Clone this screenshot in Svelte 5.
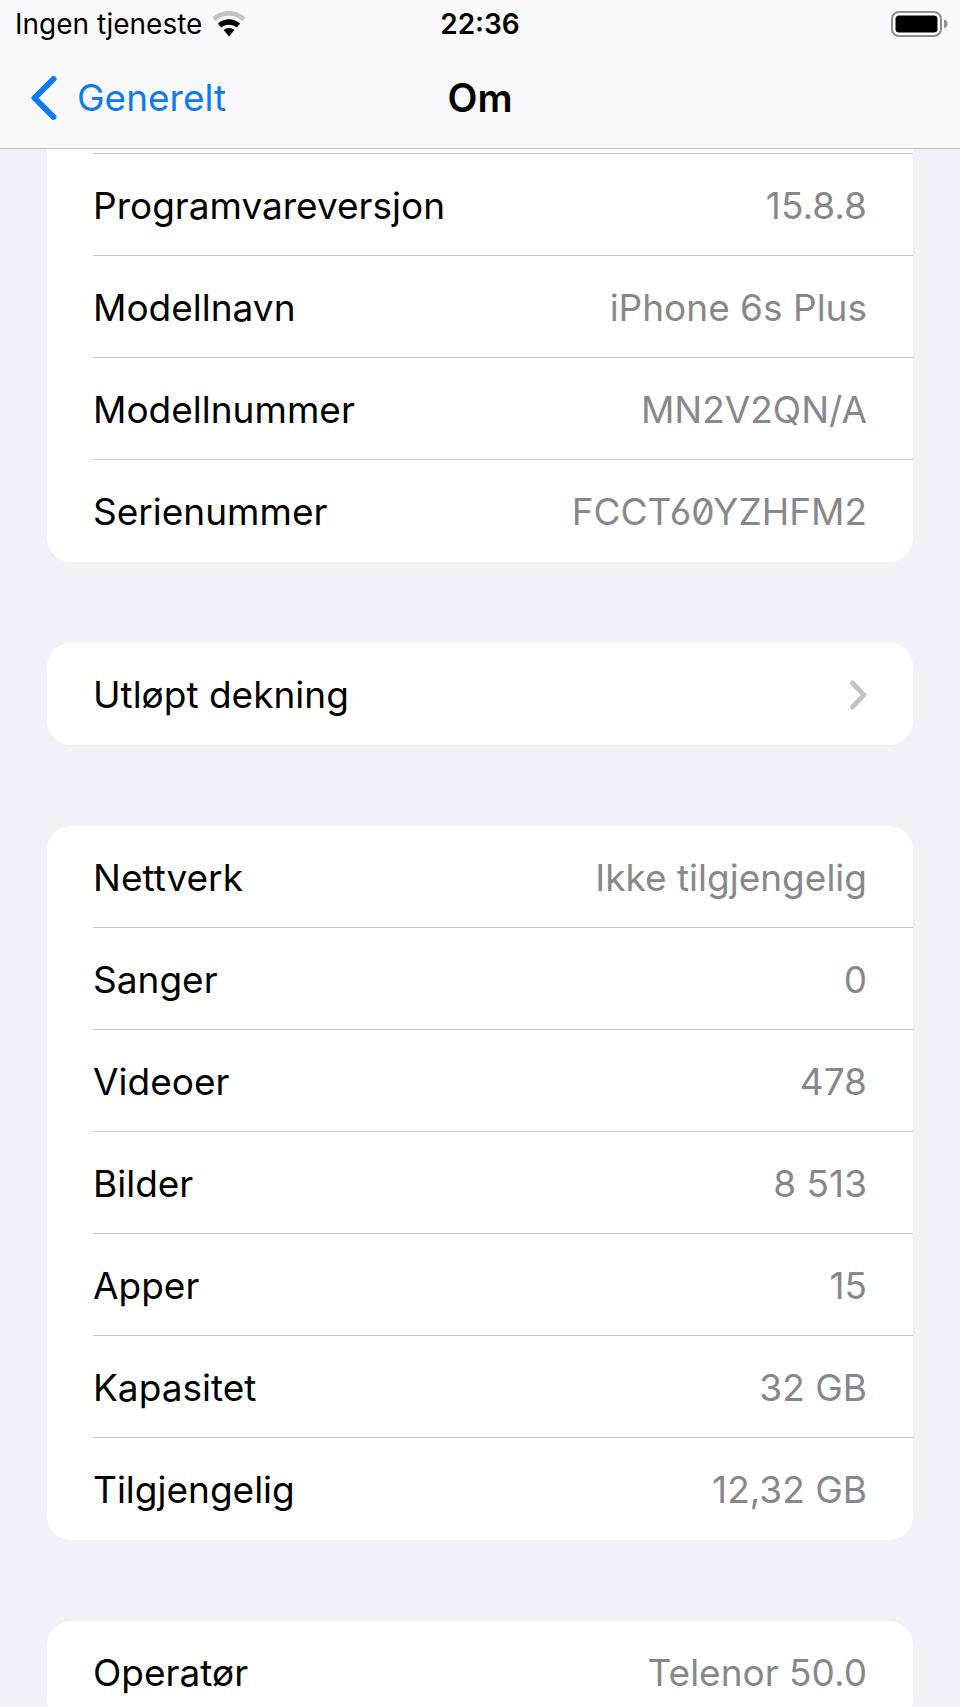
<script lang="ts">
	type Row = { label: string; value?: string; serial?: boolean; link?: boolean }
	type Group = { id: string; rows: Row[]; continued?: boolean }

	const groups: Group[] = [
		{
			id: 'device',
			continued: true,
			rows: [
				{ label: 'Programvareversjon', value: '15.8.8' },
				{ label: 'Modellnavn', value: 'iPhone 6s Plus' },
				{ label: 'Modellnummer', value: 'MN2V2QN/A' },
				{ label: 'Serienummer', value: 'FCCT60YZHFM2', serial: true }
			]
		},
		{ id: 'coverage', rows: [{ label: 'Utløpt dekning', link: true }] },
		{
			id: 'content',
			rows: [
				{ label: 'Nettverk', value: 'Ikke tilgjengelig' },
				{ label: 'Sanger', value: '0' },
				{ label: 'Videoer', value: '478' },
				{ label: 'Bilder', value: '8 513' },
				{ label: 'Apper', value: '15' },
				{ label: 'Kapasitet', value: '32 GB' },
				{ label: 'Tilgjengelig', value: '12,32 GB' }
			]
		},
		{ id: 'carrier', rows: [{ label: 'Operatør', value: 'Telenor 50.0' }] }
	]
</script>

<div class="screen">
	<header>
		<div class="status">
			<div class="service">
				<span>Ingen tjeneste</span>
				<svg width="34" height="26" viewBox="0 0 34 26" aria-hidden="true">
					<path
						d="M17 0C10.500 0 4.600 2.500 0.400 6.600L3.600 10C7.100 6.600 11.800 4.700 17 4.700S26.900 6.600 30.400 10L33.600 6.600C29.400 2.500 23.500 0 17 0Z"
						fill="#c3c3c5"
					/>
					<path
						d="M17 8.300C12.700 8.300 8.800 10 5.900 12.700L9.300 16.600C11.300 14.700 14 13.700 17 13.700S22.700 14.700 24.700 16.600L28.100 12.700C25.200 10 21.300 8.300 17 8.300Z"
					/>
					<path d="M17 17C14.900 17 13 17.800 11.600 19.100L17 25.400L22.400 19.100C21 17.800 19.100 17 17 17Z" />
				</svg>
			</div>
			<time>22:36</time>
			<svg class="battery" width="57" height="26" viewBox="0 0 57 26" aria-hidden="true">
				<rect x="1" y="1" width="49" height="24" rx="7" fill="#fff" stroke="#8e8e90" stroke-width="2" />
				<rect x="4.500" y="4.500" width="42" height="17" rx="3.500" />
				<path d="M53 8.500C55.200 9.300 56.500 11 56.500 13S55.200 16.700 53 17.500Z" fill="#8e8e90" />
			</svg>
		</div>
		<nav>
			<button class="back">
				<svg width="26" height="44" viewBox="0 0 26 44" aria-hidden="true">
					<path d="M22.500 3L3.500 22L22.500 41" />
				</svg>
				<span>Generelt</span>
			</button>
			<h1>Om</h1>
		</nav>
	</header>

	<main>
		{#each groups as group (group.id)}
			<ul class="group" class:continued={group.continued}>
				{#if group.continued}
					<li class="row partial" aria-hidden="true"></li>
				{/if}
				{#each group.rows as row (row.label)}
					<li class="row">
						{#if row.link}
							<button class="cell">
								<span>{row.label}</span>
								<svg width="18" height="30" viewBox="0 0 18 30" aria-hidden="true">
									<path d="M3.500 3L15 15L3.500 27" />
								</svg>
							</button>
						{:else}
							<div class="cell">
								<span>{row.label}</span>
								<span class="value" class:serial={row.serial}>{row.value}</span>
							</div>
						{/if}
					</li>
				{/each}
			</ul>
		{/each}
	</main>
</div>

<style>
	:global(body) {
		margin: 0;
	}

	.screen {
		display: flex;
		flex-direction: column;
		height: 100vh;
		background: #f2f1f8;
		color: #000;
		font-family: Inter, 'Liberation Sans', sans-serif;
		font-size: 37px;
		line-height: 48px;
	}

	button {
		border: none;
		background: none;
		font: inherit;
		color: inherit;
		cursor: pointer;
	}

	header {
		flex: none;
		background: #f9f9fb;
		border-bottom: 1px solid #c2c2c5;
	}

	.status {
		display: grid;
		grid-template-columns: 1fr auto 1fr;
		align-items: center;
		height: 48px;
		padding: 0 12px;
		font-size: 28px;
		line-height: 32px;
	}

	.service {
		display: flex;
		align-items: center;
		gap: 10px;
		padding-left: 3px;
	}

	.status time {
		font-weight: 600;
	}

	.battery {
		justify-self: end;
	}

	nav {
		display: grid;
		grid-template-columns: 1fr auto 1fr;
		align-items: center;
		height: 100px;
		padding: 0 31px;
	}

	.back {
		display: flex;
		align-items: center;
		justify-self: start;
		gap: 20px;
		padding: 0;
		color: #0f7aec;
	}

	.back path {
		fill: none;
		stroke: #0a7aff;
		stroke-width: 6;
		stroke-linecap: round;
		stroke-linejoin: round;
	}

	h1 {
		margin: 0;
		font-size: 39px;
		font-weight: 600;
	}

	main {
		flex: 1;
		min-height: 0;
		display: flex;
		flex-direction: column;
		gap: 81px;
		padding: 0 47px;
		overflow-y: auto;
		scrollbar-width: none;
	}

	.group {
		flex: none;
		margin: 0;
		padding: 0 0 0 46px;
		list-style: none;
		background: #fff;
		border-radius: 24px;
	}

	.group.continued {
		border-top-left-radius: 0;
		border-top-right-radius: 0;
	}

	.row {
		box-sizing: border-box;
		height: 102px;
		border-bottom: 1px solid #c9c9cb;
	}

	.row:last-child {
		border-bottom-color: transparent;
	}

	/* tail of the row scrolled under the header */
	.row.partial {
		height: 5px;
	}

	.cell {
		box-sizing: border-box;
		display: flex;
		align-items: center;
		justify-content: space-between;
		width: 100%;
		height: 100%;
		padding: 3px 46px 0 0;
		text-align: left;
	}

	.cell path {
		fill: none;
		stroke: #c3c3c5;
		stroke-width: 5;
		stroke-linecap: round;
		stroke-linejoin: round;
	}

	.value {
		color: #88888b;
	}

	.serial {
		font-feature-settings: 'zero', 'cv03';
	}
</style>
